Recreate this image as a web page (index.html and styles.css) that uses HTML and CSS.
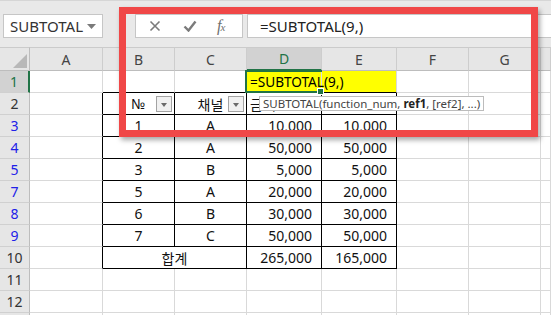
FILE: index.html
```html
<!DOCTYPE html>
<html lang="ko">
<head>
  <meta charset="UTF-8">
  <title>SUBTOTAL</title>
  <link rel="stylesheet" href="styles.css">
</head>
<body>
<div class="app">
  <div class="bar">
    <div class="namebox">
      <span>SUBTOTAL</span>
      <svg class="caret" width="9" height="5" viewBox="0 0 9 5"><path d="M0 0h9L4.5 5z" fill="#7a7a7a"/></svg>
    </div>
    <div class="grip">⋮</div>
    <div class="fbtns">
      <svg class="ico" width="12" height="12" viewBox="0 0 12 12"><path d="M1.5 1.5l9 9M10.5 1.5l-9 9" stroke="#7b7b7b" stroke-width="1.6"/></svg>
      <svg class="ico" width="14" height="12" viewBox="0 0 14 12"><path d="M1.5 6.5l4 4 7-9" stroke="#7b7b7b" stroke-width="2.4" fill="none"/></svg>
      <span class="fx"><i>f</i><i class="sx">x</i></span>
    </div>
    <div class="finput">=SUBTOTAL(9,)</div>
  </div>

  <div class="sheet">
    <div class="c corner"><svg width="14" height="14" viewBox="0 0 14 14"><path d="M14 0v14H0z" fill="#b8b8b8"/></svg></div>
    <div class="c ch">A</div><div class="c ch">B</div><div class="c ch">C</div><div class="c ch sel">D</div><div class="c ch">E</div><div class="c ch">F</div><div class="c ch">G</div><div class="c ch"></div>

    <div class="c rh sel">1</div><div class="c"></div><div class="c tt"></div><div class="c tt"></div>
    <div class="c tt edit">=SUBTOTAL(9,<span class="caretline"></span>)</div><div class="c tt yel"></div><div class="c"></div><div class="c"></div><div class="c"></div>

    <div class="c rh">2</div><div class="c lb"></div>
    <div class="c tb mid">№<span class="filter"></span></div>
    <div class="c tb mid">채널<span class="filter"></span></div>
    <div class="c tb">금액</div><div class="c tb"></div><div class="c"></div><div class="c"></div><div class="c"></div>

    <div class="c rh flt">3</div><div class="c lb"></div><div class="c tb mid">1</div><div class="c tb mid">A</div><div class="c tb num">10,000</div><div class="c tb num">10,000</div><div class="c"></div><div class="c"></div><div class="c"></div>
    <div class="c rh flt">4</div><div class="c lb"></div><div class="c tb mid">2</div><div class="c tb mid">A</div><div class="c tb num">50,000</div><div class="c tb num">50,000</div><div class="c"></div><div class="c"></div><div class="c"></div>
    <div class="c rh flt">5</div><div class="c lb"></div><div class="c tb mid">3</div><div class="c tb mid">B</div><div class="c tb num">5,000</div><div class="c tb num">5,000</div><div class="c"></div><div class="c"></div><div class="c"></div>
    <div class="c rh flt">7</div><div class="c lb"></div><div class="c tb mid">5</div><div class="c tb mid">A</div><div class="c tb num">20,000</div><div class="c tb num">20,000</div><div class="c"></div><div class="c"></div><div class="c"></div>
    <div class="c rh flt">8</div><div class="c lb"></div><div class="c tb mid">6</div><div class="c tb mid">B</div><div class="c tb num">30,000</div><div class="c tb num">30,000</div><div class="c"></div><div class="c"></div><div class="c"></div>
    <div class="c rh flt">9</div><div class="c lb"></div><div class="c tb mid">7</div><div class="c tb mid">C</div><div class="c tb num">50,000</div><div class="c tb num">50,000</div><div class="c"></div><div class="c"></div><div class="c"></div>

    <div class="c rh">10</div><div class="c lb"></div><div class="c tb mid span2">합계</div><div class="c tb num">265,000</div><div class="c tb num">165,000</div><div class="c"></div><div class="c"></div><div class="c"></div>

    <div class="c rh">11</div><div class="c"></div><div class="c"></div><div class="c"></div><div class="c"></div><div class="c"></div><div class="c"></div><div class="c"></div><div class="c"></div>
    <div class="c rh">12</div><div class="c"></div><div class="c"></div><div class="c"></div><div class="c"></div><div class="c"></div><div class="c"></div><div class="c"></div><div class="c"></div>
    <div class="c rh"></div><div class="c"></div><div class="c"></div><div class="c"></div><div class="c"></div><div class="c"></div><div class="c"></div><div class="c"></div><div class="c"></div>
  </div>

  <div class="tip">SUBTOTAL(function_num, <b>ref1</b>, [ref2], ...)</div>
  <div class="callout"></div>
</div>
</body>
</html>
```

FILE: styles.css
```css
body {
  margin: 0;
  font-family: "Noto Sans", "Noto Sans CJK KR", sans-serif;
}
.app {
  position: relative;
  width: 551px;
  height: 315px;
  overflow: hidden;
  background: #fff;
}

/* formula bar */
.bar {
  height: 47px;
  box-sizing: border-box;
  padding-top: 13px;
  display: flex;
  align-items: flex-start;
  background: #e9e9e9;
  border-top: 1px solid #d6d6d6;
}
.namebox {
  margin-left: 3px;
  width: 100px;
  height: 24px;
  box-sizing: border-box;
  display: flex;
  align-items: center;
  padding: 0 6px;
  background: #fff;
  border: 1px solid #c6c6c6;
  font-size: 15px;
  color: #333;
}
.caret {
  margin-left: auto;
}
.grip {
  width: 32px;
  box-sizing: border-box;
  padding-left: 11px;
  font-size: 14px;
  line-height: 24px;
  color: #9a9a9a;
}
.fbtns {
  width: 108px;
  height: 24px;
  box-sizing: border-box;
  display: flex;
  align-items: center;
  gap: 22px;
  padding-left: 13px;
  background: #fff;
  border: 1px solid #c6c6c6;
}
.fx {
  font-family: "Liberation Serif", serif;
  font-size: 16px;
  color: #6f6f6f;
  margin-left: -2px;
}
.fx .sx {
  font-size: 11px;
  margin-left: -1px;
}
.finput {
  margin-left: 4px;
  flex: 1;
  height: 24px;
  box-sizing: border-box;
  padding-left: 12px;
  background: #fff;
  border: 1px solid #c6c6c6;
  border-right: none;
  font-size: 15px;
  line-height: 22px;
  color: #222;
}

/* grid */
.sheet {
  display: grid;
  grid-template-columns: 30px 73px 72px 72px 75px 75px 72px 72px 10px;
  grid-template-rows: 24px;
  grid-auto-rows: 22px;
}
.c {
  position: relative;
  box-sizing: border-box;
  display: flex;
  align-items: center;
  padding: 0 3px;
  border-right: 1px solid #d9d9d9;
  border-bottom: 1px solid #d9d9d9;
  font-size: 14px;
  color: #111;
  white-space: nowrap;
}
.ch {
  justify-content: center;
  background: #e6e6e6;
  border-top: 1px solid #cbcbcb;
  border-right-color: #cdcdcd;
  border-bottom-color: #bdbdbd;
  color: #444;
}
.ch.sel {
  background: #d2d2d2;
  border-bottom: 2px solid #217346;
  color: #217346;
}
.corner {
  background: #e6e6e6;
  border-top: 1px solid #cbcbcb;
  border-right-color: #bdbdbd;
  border-bottom-color: #bdbdbd;
  justify-content: flex-end;
  align-items: flex-end;
  padding: 0 2px 2px 0;
}
.rh {
  justify-content: center;
  padding: 0;
  background: #e6e6e6;
  border-right-color: #bdbdbd;
  border-bottom-color: #d0d0d0;
  color: #333;
}
.rh.sel {
  background: #d2d2d2;
  border-right: 2px solid #217346;
  color: #217346;
}
.rh.flt {
  color: #2020e8;
}

.tb {
  border-right-color: #000;
  border-bottom-color: #000;
}
.lb {
  border-right-color: #000;
}
.tt {
  border-bottom-color: #000;
}
.mid {
  justify-content: center;
}
.num {
  justify-content: flex-end;
  padding-right: 9px;
}
.span2 {
  grid-column: span 2;
}
.filter {
  position: absolute;
  right: 2px;
  top: 3px;
  width: 16px;
  height: 16px;
  box-sizing: border-box;
  border: 1px solid #a3a3a3;
  background: #f1f1f1;
}
.filter:after {
  content: "";
  position: absolute;
  left: 4px;
  top: 6px;
  border-left: 3.5px solid transparent;
  border-right: 3.5px solid transparent;
  border-top: 4px solid #6b6b6b;
}

/* active cell in edit mode */
.yel {
  background: #ffff00;
}
.edit {
  z-index: 1;
  overflow: visible;
  background: #ffff00;
  font-size: 13.6px;
  color: #000;
}
.edit:before {
  content: "";
  position: absolute;
  left: -2px;
  top: -1px;
  right: -1px;
  bottom: -1px;
  border: 2px solid #217346;
  border-right: none;
}
.edit:after {
  content: "";
  position: absolute;
  right: -3px;
  bottom: -3px;
  width: 5px;
  height: 5px;
  background: #217346;
  border: 1px solid #fff;
}
.caretline {
  display: inline-block;
  width: 1px;
  height: 17px;
  background: #1b1b8f;
}

/* overlays */
.tip {
  position: absolute;
  left: 259px;
  top: 96px;
  height: 15px;
  box-sizing: border-box;
  padding: 0 3px;
  background: #fff;
  border: 1px solid #bcbcbc;
  font-size: 11.5px;
  line-height: 13px;
  color: #444;
  z-index: 2;
}
.tip b {
  color: #222;
}
.callout {
  position: absolute;
  left: 119px;
  top: 7px;
  width: 419px;
  height: 130px;
  box-sizing: border-box;
  border: 7px solid #f04747;
  box-shadow: 2px 3px 5px rgba(0, 0, 0, 0.35);
  z-index: 3;
}
```
